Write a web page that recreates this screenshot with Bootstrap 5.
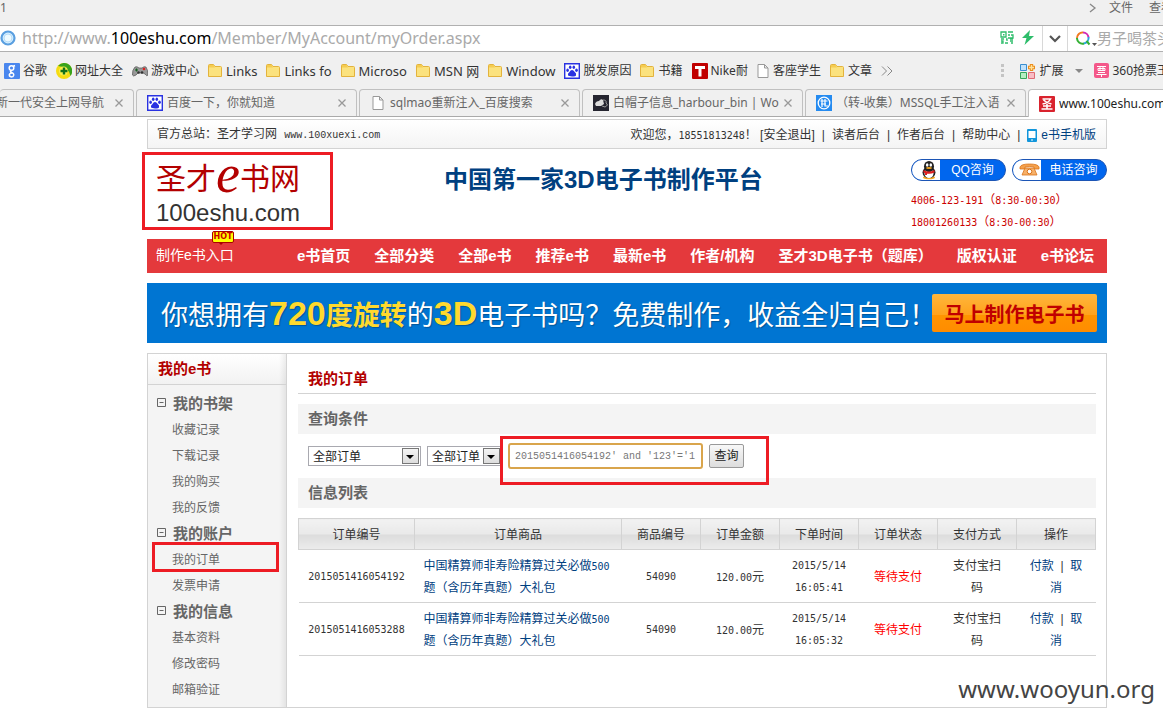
<!DOCTYPE html>
<html lang="zh-CN">
<head>
<meta charset="utf-8">
<meta name="viewport" content="width=device-width, initial-scale=1">
<title>我的订单 - 圣才e书网</title>
<link href="https://cdn.jsdelivr.net/npm/bootstrap@5.3.0/dist/css/bootstrap.min.css" rel="stylesheet">
<style>
body{font:12px/22px "Liberation Sans","Noto Sans CJK SC",sans-serif;color:#333;background:#fff;overflow-x:hidden}
a{color:inherit;text-decoration:none}
svg{display:block;flex:none}
h1,h2,h3,ul,p{margin:0;padding:0;list-style:none}
.num{font-family:"DejaVu Sans Mono",monospace;font-size:10px}
span.num{line-height:10px}
.typed{font-family:"Liberation Mono",monospace;font-size:10px}
/* browser chrome */
.chrome{background:#f0f0f0;font-family:"Noto Sans","Noto Sans CJK SC",sans-serif;white-space:nowrap;overflow:hidden}
.chrome .menu-row{height:25px;line-height:16px;color:#666}
.menu-row .menus{margin-right:-10px}
.chrome .url-row{height:27px;background:#fff;border-top:1px solid #b0b0b0;border-bottom:1px solid #b0b0b0;font-size:15px;line-height:24px;color:#aaa}
.url-row .address{font-size:16px;padding-left:6px}
.url-row b{font-weight:400;color:#000}
.url-row .cell{border-left:1px solid #d8d8d8;height:25px}
.url-row .hint{margin-right:-24px}
.marks{height:37px;gap:9px;padding-left:4px}
.marks a{display:flex;align-items:center;gap:3px}
.marks a.fold{gap:4px}
.marks a.latin{font-size:13px}
.marks .addons{margin-right:-6px}
.marks .addons .caret{margin:0 11px 0 12px}
.tabs{height:28px;gap:2px;border-bottom:1px solid #aaa}
.tabs a{flex:0 0 221px;height:27px;border:1px solid #c0c0c0;border-bottom:0;border-radius:4px 4px 0 0;padding:0 10px;color:#666;background:#f0f0f0;display:flex;align-items:center;gap:4px}
.tabs a.first-tab{flex-basis:134px;min-width:0;justify-content:flex-end;gap:11px;border-left:0;padding-left:0}
.tabs a.on{background:#fff;color:#222;height:28px}
.tabs a span{overflow:hidden;flex:1}
.tabs a.first-tab span{flex:none;overflow:visible}
/* site */
.site{padding:2px 56px 10px 147px;position:relative}
.topbar{height:30px;border:1px solid #d3d3d3;background:linear-gradient(#fff,#f4f4f4);padding:2px 10px 0 9px}
.topbar .links{gap:7px}
.navy{color:#004080}
.masthead{height:90px}
.logo{flex:0 0 297px;padding-left:9px;color:#b30000;position:relative}
.logo .zh{font-size:30px;line-height:40px;height:40px;font-weight:400;margin-top:10px;white-space:nowrap}
.logo .zh i{font:italic 54px/30px "Liberation Serif",serif;vertical-align:-3px}
.logo .en{font-size:24px;line-height:28px;color:#333}
.slogan{font-size:24px;line-height:30px;font-weight:700;color:#004080;padding-top:16px}
.contact{width:196px;padding-top:10px;color:#c00}
.pill{height:22px;width:95px;border:1px solid #1c55b5;border-radius:11px;overflow:hidden;padding:0;background:#06e;color:#fff;font-size:12px;line-height:20px;display:flex}
.pill svg{background:#fff}
.pill span{flex:1}
.mainnav{height:34px;background:#e4393c;color:#fff;font-size:15px;font-weight:700;padding:0 13px 0 9px;white-space:nowrap}
.mainnav .entry{font-size:14px;font-weight:400;position:relative;margin-top:-3px}
.mainnav .list{gap:24px}
.hot{position:absolute;left:56px;top:-13px;height:12px;width:22px;border:1px solid #a00;border-radius:2px;background:#ff0;color:#c00;font:700 8px/10px "DejaVu Sans",sans-serif;text-align:center}
.hot::after{content:"";position:absolute;left:5px;top:10px;border:3px solid transparent;border-top-color:#a00}
.promo{height:60px;margin-top:10px;background:#0075d2;color:#fff;padding:0 10px 0 14px;font-size:27px;font-weight:400;white-space:nowrap}
.promo .txt{flex:1;min-width:0;line-height:54px;padding-top:6px;text-shadow:1px 1px 1px #0004}
.promo b{color:#ffd92e;font-weight:700}
.promo b big{font-size:34px;line-height:30px}
.make{width:165px;height:38px;border:0;border-radius:2px;background:linear-gradient(#ffb63c,#ffa21c 55%,#ff9400 56%,#ff8c00);color:#c00000;font-size:20px;font-weight:700;line-height:38px;padding:2px 0 0}
.panel{margin-top:10px;border:1px solid #d3d3d3;min-height:355px}
.side{flex:0 0 139px;border-right:1px solid #d3d3d3;background:linear-gradient(90deg,#0000 131px,#0001 138px) #f4f4f4;color:#666}
.side h2{font-size:15px;font-weight:700;line-height:30px;height:31px;color:#b30000;border-bottom:1px solid #d3d3d3;padding-left:10px;background:linear-gradient(90deg,#0000 131px,#0001 138px),linear-gradient(#fff,#f2f2f2)}
.side ul{padding-top:6px}
.side li{line-height:26px;height:26px;padding-left:24px;position:relative}
.side li.grp{font-size:15px;font-weight:700;padding-left:9px;display:flex;gap:7px}
.side li.grp svg{margin-top:7px}
.content{flex:1;min-width:0;padding:10px 10px 0 11px}
.content h1{font-size:15px;font-weight:700;line-height:30px;height:30px;border-bottom:1px solid #d3d3d3;padding-left:10px;color:#b30000}
.content h3{font-size:15px;font-weight:700;line-height:30px;height:30px;background:#f4f4f4;padding-left:10px;color:#666}
.content h1+h3{margin-top:10px}
.filter{height:44px;padding-left:10px;gap:6px;position:relative}
.pick{position:relative;display:block}
.pick select{appearance:none;width:100%;height:20px;border:1px solid #a9a9b0;background:#fff;color:#222;padding:1px 4px 0;line-height:18px;border-radius:0;display:block}
.pick::before{content:"";position:absolute;right:2px;top:2px;width:17px;height:16px;border:1px solid #777;background:linear-gradient(#f4f4f4,#ddd);pointer-events:none}
.pick::after{content:"";position:absolute;right:7px;top:9px;border:4px solid transparent;border-top-color:#000;border-bottom:0;width:0;pointer-events:none}
.p1{width:113px}.p2{width:75px}
.filter input{width:195px;height:26px;border:2px solid #d9a54c;border-radius:3px;outline:0;padding:0 5px;color:#777}
.filter button{width:35px;height:24px;border:1px solid #999;border-radius:2px;background:linear-gradient(#f8f8f8,#ddd);padding:0;line-height:20px;color:#222}
.ring{position:absolute;border:3px solid #ed1c24;pointer-events:none}
.orders{table-layout:fixed;width:100%;margin-top:10px;border-collapse:collapse;text-align:center}
.orders th{font-weight:400;height:31px;padding:1px 0 0;border:1px solid #d3d3d3;background:linear-gradient(#f2f2f2,#e9e9e9 49%,#dcdcdc 51%,#ececec)}
.orders td{height:53px;padding:5px 9px 3px;border-bottom:1px solid #d3d3d3}
.orders .prod{text-align:left}
.orders .op{padding:5px 8px 3px}
.orders .pay{padding:5px 14px 3px}
.orders .wait{color:#f00}
.stamp{position:absolute;right:8px;bottom:14px;font:24px/30px "Noto Sans",sans-serif;color:#444}
</style>
</head>
<body>
<svg width="0" height="0" class="position-absolute" aria-hidden="true">
<symbol id="fold" viewBox="0 0 14 13"><path d="M.5 12.5V1.500q0-1 1-1h4l1.500 2h5.500q1 0 1 1v9z" fill="#fbe27e" stroke="#e3b33c"/><path d="M1 3.500V1h4.500L7 3.500z" fill="#f5cc50"/></symbol>
<symbol id="paw" viewBox="0 0 16 16"><path d="M.7.7h14.600v14.600H.7z" fill="#fff" stroke="#2932e1" stroke-width="1.400"/><g fill="#2932e1"><ellipse cx="3.600" cy="7.200" rx="1.300" ry="1.700"/><ellipse cx="6.200" cy="4.300" rx="1.300" ry="1.800"/><ellipse cx="9.800" cy="4.300" rx="1.300" ry="1.800"/><ellipse cx="12.500" cy="7.200" rx="1.300" ry="1.700"/><path d="M8 7q1.500 0 2.500 1.800 2.300 1.900 1.500 3.600-.8 1.500-4 1t-4-.9Q3.200 10.500 5.500 9 6.500 7 8 7z"/></g></symbol>
<symbol id="doc" viewBox="0 0 12 14"><path d="M1 .5h6.500L11 4v9.500H1zM7.500.5V4H11" fill="#fff" stroke="#999"/></symbol>
<symbol id="x" viewBox="0 0 8 8"><path d="M.5.5l7 7m0-7l-7 7" stroke="#999" stroke-width="1.300" fill="none"/></symbol>
<symbol id="minus" viewBox="0 0 9 9"><path d="M.5.500h8v8h-8zM2.500 4.500h4" fill="none" stroke="#666"/></symbol>
</svg>

<header class="chrome">
<div class="menu-row d-flex justify-content-between"><span>1</span>
<div class="menus d-flex"><svg width="8" height="16" viewBox="0 0 8 16" class="me-2"><path d="M1 4l5 4-5 4" fill="none" stroke="#888" stroke-width="1.300"/></svg><span class="ms-1 me-3">文件</span><span>查看</span></div></div>
<div class="url-row d-flex">
<svg width="16" height="16" viewBox="0 0 16 16" class="mt-1"><circle cx="8" cy="8" r="6.500" fill="#d8f0ff" stroke="#5a9fe0" stroke-width="2.200"/><circle cx="8" cy="8" r="4" fill="#eefaff" stroke="#b5dcf8"/></svg>
<span class="flex-fill address">http://www.<b>100eshu.com</b>/Member/MyAccount/myOrder.aspx</span>
<svg width="14" height="14" viewBox="0 0 14 14" class="mt-1 me-2"><g fill="none" stroke="#2ebd6b" stroke-width="1.300"><path d="M1 2h5v5H1zM8 2h5M8 5h2m1 0h2v3H8M1 9h3m2 0h1v2m3-2h3M1 11h2v2H1m4 0h3m2-2h3m-2 2h2"/></g><path d="M3 4h1.500v1.500H3z" fill="#2ebd6b"/></svg>
<svg width="12" height="15" viewBox="0 0 12 15" class="mt-1 me-2"><path d="M8 0L0 8h4.500L2.500 15 12 6H7z" fill="#2ebd6b"/></svg>
<div class="cell px-1"><svg width="16" height="25" viewBox="0 0 16 25"><path d="M3 10l5 5 5-5" fill="none" stroke="#555" stroke-width="2.200"/></svg></div>
<div class="cell ps-2 d-flex"><svg width="21" height="24" viewBox="0 0 21 24"><g fill="none" stroke-width="2"><path d="M1 12a5.500 5.500 0 0 1 6-5.500" stroke="#f27b22"/><path d="M7 6.500a5.500 5.500 0 0 1 5.500 5" stroke="#d22bb4"/><path d="M12.500 11a5.500 5.500 0 0 1-5 6.500" stroke="#28a8e0"/><path d="M8 17.500A5.500 5.500 0 0 1 1 12M10.500 15l3 3.500" stroke="#35b135"/></g><path d="M16 17h5l-2.500 3z" fill="#555"/></svg><span class="hint">男子喝茶头条</span></div>
</div>
<nav class="marks d-flex align-items-center">
<a href="#"><svg width="16" height="16" viewBox="0 0 16 16"><rect width="16" height="16" rx="1" fill="#4a87ee"/><g fill="none" stroke="#fff" stroke-width="1.500"><circle cx="7.500" cy="5" r="2.300"/><path d="M7.500 7.500q-2 1 0 2 3 1 2 3.200t-4 .3q-1-2.500 2.500-3M9 3.500l2-1"/></g></svg>谷歌</a>
<a href="#"><svg width="16" height="16" viewBox="0 0 16 16"><circle cx="8" cy="8" r="8" fill="#f6dc12"/><path d="M2 3a8 8 0 0 1 12.500 10Q13 4 2 3z" fill="#37a31c"/><circle cx="7.500" cy="8" r="4.500" fill="#fbf04a"/><path d="M8 4.500v7M4.500 8h7" stroke="#13701b" stroke-width="2.400"/></svg>网址大全</a>
<a href="#"><svg width="16" height="16" viewBox="0 0 16 16"><path d="M3 4q2-1 4 1h3q2-2 4-1 2 3 2 8-1 2-3-1l-2-1H6l-2 2q-3 2-3.500 0Q0 7 3 4z" fill="#999" stroke="#555" stroke-width=".7"/><path d="M3 7h3M4.500 5.500v3" stroke="#195f23" stroke-width="1.200"/><circle cx="12" cy="6" r="1.300" fill="#d22"/><circle cx="6.500" cy="9.500" r="1.300" fill="#333"/><circle cx="10" cy="9.500" r="1.300" fill="#333"/></svg>游戏中心</a>
<a href="#" class="fold latin"><svg width="14" height="13"><use href="#fold"/></svg>Links</a>
<a href="#" class="fold latin"><svg width="14" height="13"><use href="#fold"/></svg>Links fo</a>
<a href="#" class="fold latin"><svg width="14" height="13"><use href="#fold"/></svg>Microso</a>
<a href="#" class="fold latin"><svg width="14" height="13"><use href="#fold"/></svg>MSN 网</a>
<a href="#" class="fold latin"><svg width="14" height="13"><use href="#fold"/></svg>Window</a>
<a href="#"><svg width="16" height="16"><use href="#paw"/></svg>脱发原因</a>
<a href="#" class="fold"><svg width="14" height="13"><use href="#fold"/></svg>书籍</a>
<a href="#"><svg width="16" height="16" viewBox="0 0 16 16"><rect width="16" height="16" rx="1" fill="#c00000"/><path d="M3 3h10v3h-3.500v7.500h-3V6H3z" fill="#fff"/></svg>Nike耐</a>
<a href="#" class="fold"><svg width="12" height="14"><use href="#doc"/></svg>客座学生</a>
<a href="#" class="fold"><svg width="14" height="13"><use href="#fold"/></svg>文章</a>
<svg width="12" height="10" viewBox="0 0 12 10"><path d="M1 .5L5.500 5 1 9.500M6.500.5L11 5 6.500 9.500" fill="none" stroke="#888"/></svg>
<div class="addons ms-auto d-flex align-items-center"><svg width="3" height="14" viewBox="0 0 3 14" class="me-3"><path d="M0 0h3v3H0zm0 5h3v3H0zm0 5h3v3H0z" fill="#c4c4c4"/></svg>
<a href="#"><svg width="16" height="16" viewBox="0 0 16 16"><path d="M.5 1.500h6v6h-6z" fill="#c2e2fa" stroke="#3a8fd0"/><path d="M.5 9.500h6v6h-6z" fill="#b5edc3" stroke="#35a65a"/><path d="M8.500 9.500h6v6h-6z" fill="#f9bcc4" stroke="#df6b75"/><path d="M11.500 1v7M8 4.500h7" stroke="#eb8c1a" stroke-width="3.400"/><path d="M11.500 2v5M9 4.500h5" stroke="#ffe29a" stroke-width="1.400"/></svg>扩展</a>
<svg class="caret" width="8" height="4" viewBox="0 0 8 4"><path d="M0 0h8L4 4z" fill="#888"/></svg>
<a href="#"><svg width="15" height="15" viewBox="0 0 15 15"><rect width="15" height="15" rx="2" fill="#f4588a"/><path d="M3 3.500h9M4 5.500h7v2H4zm2-2v4m3-4v4M4 9.500h7M2.500 11.500h10M7.500 11v3" fill="none" stroke="#fff"/></svg>360抢票王</a></div>
</nav>
<nav class="tabs d-flex">
<a href="#" class="first-tab"><span>新一代安全上网导航</span><svg width="8" height="8"><use href="#x"/></svg></a>
<a href="#"><svg width="16" height="16"><use href="#paw"/></svg><span>百度一下，你就知道</span><svg width="8" height="8"><use href="#x"/></svg></a>
<a href="#"><svg width="16" height="14"><use href="#doc"/></svg><span>sqlmao重新注入_百度搜索</span><svg width="8" height="8"><use href="#x"/></svg></a>
<a href="#"><svg width="16" height="16" viewBox="0 0 16 16"><path d="M0 0h16v16H0z" fill="#252530"/><path d="M2 9q1-3 4-3 2-3 4-1l1 4-3 2H3z" fill="#ddd"/><path d="M10 5q4 0 3 3 3 2-1 4l-3-1" fill="none" stroke="#999"/></svg><span>白帽子信息_harbour_bin | Wo</span><svg width="8" height="8"><use href="#x"/></svg></a>
<a href="#"><svg width="16" height="16" viewBox="0 0 16 16"><path d="M0 0h16v16H0z" fill="#258bf0"/><circle cx="8" cy="8" r="5.800" fill="none" stroke="#fff" stroke-width="1.300"/><path d="M4.500 6h7M6 4v8M9 4v7h3M5 9h5" stroke="#fff" fill="none" stroke-width="1.200"/></svg><span>（转-收集）MSSQL手工注入语</span><svg width="8" height="8"><use href="#x"/></svg></a>
<a href="#" class="on"><svg width="16" height="16" viewBox="0 0 16 16"><rect width="16" height="16" rx="1" fill="#d9232e"/><path d="M3.500 3h8q-2 4-8 5m1-4q3 3 8 4M4 10h8m-4-2v5M2.500 13h11" stroke="#fff" fill="none" stroke-width="1.600"/></svg><span>www.100eshu.com</span></a>
</nav>
</header>

<div class="site">
<div class="topbar d-flex justify-content-between align-items-center">
<div>官方总站：圣才学习网 <a href="#" class="typed ms-1">www.100xuexi.com</a></div>
<div class="links d-flex">
<span>欢迎您，<span class="num">18551813248</span>！ <a href="#">[安全退出]</a></span><span>|</span><a href="#">读者后台</a><span>|</span><a href="#">作者后台</a><span>|</span><a href="#">帮助中心</a><span>|</span>
<a href="#" class="navy d-flex align-items-center gap-1"><svg width="10" height="13" viewBox="0 0 10 13"><rect width="10" height="13" rx="1" fill="#1296db"/><path d="M1.500 2h7v7h-7z" fill="#fff"/><path d="M4 10.500h2v1H4z" fill="#fff"/></svg>e书手机版</a>
</div></div>

<div class="masthead d-flex">
<a href="#" class="logo"><div class="zh">圣才<i>e</i>书网</div><div class="en">100eshu.com</div><span class="ring" style="left:-5px;top:3px;width:191px;height:78px"></span></a>
<div class="slogan flex-fill">中国第一家3D电子书制作平台</div>
<div class="contact">
<div class="d-flex justify-content-between">
<button type="button" class="pill"><svg width="28" height="20" viewBox="0 0 28 20"><ellipse cx="17" cy="17.500" rx="6" ry="1.800" fill="#f3a51c"/><ellipse cx="17" cy="12.500" rx="6.500" ry="5.500" fill="#222"/><ellipse cx="17" cy="13.500" rx="4.500" ry="4.500" fill="#fff"/><ellipse cx="17" cy="6.500" rx="5" ry="5.500" fill="#222"/><ellipse cx="15.200" cy="5" rx="1.300" ry="1.700" fill="#fff"/><ellipse cx="18.800" cy="5" rx="1.300" ry="1.700" fill="#fff"/><ellipse cx="17" cy="8" rx="3" ry="1" fill="#f3a51c"/><path d="M11.500 10q5.500 3 11 0v2.500q-5.500 2.500-11 0zM13 12h2v3h-2z" fill="#e02020"/></svg><span>QQ咨询</span></button>
<button type="button" class="pill"><svg width="28" height="20" viewBox="0 0 28 20"><path d="M7 7q1-3 9.500-3T26 7v2h-5V7q-4-1-9 0v2H7z" fill="#f5a04a" stroke="#d9731a" stroke-width=".8"/><path d="M12 8h9l3 7H9z" fill="#f7b068" stroke="#d9731a" stroke-width=".8"/><circle cx="16.500" cy="11.500" r="2.300" fill="#fff" stroke="#d9731a"/></svg><span>电话咨询</span></button>
</div>
<p class="pt-1 mt-1"><span class="num">4006-123-191</span>（<span class="num">8:30-00:30</span>）</p>
<p><span class="num">18001260133</span>（<span class="num">8:30-00:30</span>）</p>
</div></div>

<nav class="mainnav d-flex justify-content-between align-items-center">
<a href="#" class="entry">制作e书入口<span class="hot">HOT</span></a>
<div class="list d-flex"><a href="#">e书首页</a><a href="#">全部分类</a><a href="#">全部e书</a><a href="#">推荐e书</a><a href="#">最新e书</a><a href="#">作者/机构</a><a href="#">圣才3D电子书（题库）</a><a href="#">版权认证</a><a href="#">e书论坛</a></div>
</nav>

<div class="promo d-flex align-items-center"><div class="txt">你想拥有<b><big>720</big>度旋转</b>的<b><big>3D</big></b>电子书吗？免费制作，收益全归自己！</div><button type="button" class="make">马上制作电子书</button></div>

<div class="panel d-flex">
<aside class="side">
<h2>我的e书</h2>
<ul>
<li class="grp"><svg width="9" height="9"><use href="#minus"/></svg>我的书架</li>
<li><a href="#">收藏记录</a></li><li><a href="#">下载记录</a></li><li><a href="#">我的购买</a></li><li><a href="#">我的反馈</a></li>
<li class="grp"><svg width="9" height="9"><use href="#minus"/></svg>我的账户</li>
<li><a href="#">我的订单</a><span class="ring" style="left:4px;top:-5px;width:127px;height:30px"></span></li><li><a href="#">发票申请</a></li>
<li class="grp"><svg width="9" height="9"><use href="#minus"/></svg>我的信息</li>
<li><a href="#">基本资料</a></li><li><a href="#">修改密码</a></li><li><a href="#">邮箱验证</a></li>
</ul>
</aside>
<main class="content">
<h1>我的订单</h1>
<h3>查询条件</h3>
<form class="filter d-flex align-items-center" onsubmit="return false">
<label class="pick p1"><select aria-label="订单类型"><option>全部订单</option></select></label>
<label class="pick p2"><select aria-label="订单状态"><option>全部订单</option></select></label>
<input type="text" class="typed" aria-label="订单编号" value="2015051416054192' and '123'='1">
<button type="submit">查询</button>
<span class="ring" style="left:202px;top:2px;width:269px;height:49px"></span>
</form>
<h3>信息列表</h3>
<table class="orders">
<colgroup><col style="width:116px"><col style="width:207px"><col><col><col><col><col><col></colgroup>
<thead><tr><th>订单编号</th><th>订单商品</th><th>商品编号</th><th>订单金额</th><th>下单时间</th><th>订单状态</th><th>支付方式</th><th>操作</th></tr></thead>
<tbody>
<tr><td class="num">2015051416054192</td><td class="prod"><a href="#" class="navy">中国精算师非寿险精算过关必做<span class="num">500</span>题（含历年真题）大礼包</a></td><td class="num">54090</td><td><span class="num">120.00</span>元</td><td class="num">2015/5/14 16:05:41</td><td class="wait">等待支付</td><td class="pay">支付宝扫码</td><td class="op"><a href="#" class="navy">付款</a>&nbsp; | &nbsp;<a href="#" class="navy">取消</a></td></tr>
<tr><td class="num">2015051416053288</td><td class="prod"><a href="#" class="navy">中国精算师非寿险精算过关必做<span class="num">500</span>题（含历年真题）大礼包</a></td><td class="num">54090</td><td><span class="num">120.00</span>元</td><td class="num">2015/5/14 16:05:32</td><td class="wait">等待支付</td><td class="pay">支付宝扫码</td><td class="op"><a href="#" class="navy">付款</a>&nbsp; | &nbsp;<a href="#" class="navy">取消</a></td></tr>
</tbody></table>
</main>
</div>
<div class="stamp">www.wooyun.org</div>
</div>
<script src="https://cdn.jsdelivr.net/npm/bootstrap@5.3.0/dist/js/bootstrap.bundle.min.js"></script>
</body>
</html>
